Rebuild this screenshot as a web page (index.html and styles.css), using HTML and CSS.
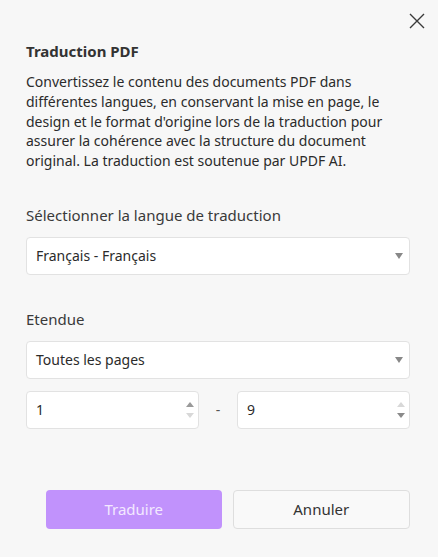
FILE: index.html
```html
<!DOCTYPE html>
<html lang="fr">
<head>
<meta charset="utf-8">
<link rel="stylesheet" href="styles.css">
</head>
<body>
<div class="dialog">
  <div class="topbar">
    <button class="close" aria-label="Fermer">
      <svg width="16" height="16" viewBox="0 0 16 16"><path d="M1 1L15 15M15 1L1 15" stroke="#3a3a3a" stroke-width="1.4" fill="none"/></svg>
    </button>
  </div>
  <h1 class="title">Traduction PDF</h1>
  <p class="desc">Convertissez le contenu des documents PDF dans différentes langues, en conservant la mise en page, le design et le format d'origine lors de la traduction pour assurer la cohérence avec la structure du document original. La traduction est soutenue par UPDF AI.</p>

  <div class="label label-lang">Sélectionner la langue de traduction</div>
  <div class="select">
    <span>Français - Français</span>
    <span class="caret"></span>
  </div>

  <div class="label label-range">Etendue</div>
  <div class="select">
    <span>Toutes les pages</span>
    <span class="caret"></span>
  </div>

  <div class="range-row">
    <div class="spin">
      <span>1</span>
      <span class="arrows"><span class="up dark"></span><span class="down light"></span></span>
    </div>
    <span class="dash">-</span>
    <div class="spin">
      <span>9</span>
      <span class="arrows"><span class="up light"></span><span class="down dark"></span></span>
    </div>
  </div>

  <div class="actions">
    <button class="btn primary">Traduire</button>
    <button class="btn secondary">Annuler</button>
  </div>
</div>
</body>
</html>
```
FILE: styles.css
```css
html, body {
  margin: 0;
  padding: 0;
  background: #f7f7f7;
}
body {
  font-family: "Noto Sans", "Open Sans", sans-serif;
  color: #2b2b2b;
  width: 438px;
  height: 557px;
  overflow: hidden;
}
.dialog {
  padding: 13px 28px 0 26px;
  display: flex;
  flex-direction: column;
}
.topbar {
  display: flex;
  justify-content: flex-end;
  margin-right: -15px;
  height: 16px;
}
.close {
  border: 0;
  background: none;
  padding: 0;
  width: 16px;
  height: 16px;
  display: block;
  cursor: pointer;
}
.title {
  margin: 12px 0 0;
  font-size: 15px;
  font-weight: 700;
  line-height: 20px;
  color: #333;
}
.desc {
  margin: 11px 0 0;
  font-size: 14px;
  line-height: 19.75px;
  color: #2b2b2b;
  padding-right: 20px;
}
.label {
  font-size: 15px;
  line-height: 20px;
  color: #3a3a3a;
}
.label-lang { margin-top: 34px; }
.label-range { margin-top: 34px; }
.select {
  margin-top: 12px;
  height: 38px;
  box-sizing: border-box;
  background: #fff;
  border: 1px solid #e2e2e2;
  border-radius: 4px;
  display: flex;
  align-items: center;
  justify-content: space-between;
  padding: 0 6px 0 9px;
  font-size: 14px;
  color: #2b2b2b;
}
.caret {
  width: 0;
  height: 0;
  border-left: 4.5px solid transparent;
  border-right: 4.5px solid transparent;
  border-top: 6px solid #888;
}
.range-row {
  margin-top: 12px;
  display: flex;
  align-items: center;
}
.spin {
  flex: 1;
  height: 38px;
  box-sizing: border-box;
  background: #fff;
  border: 1px solid #e2e2e2;
  border-radius: 4px;
  display: flex;
  align-items: center;
  justify-content: space-between;
  padding: 0 4px 0 9px;
  font-size: 14px;
  color: #2b2b2b;
}
.dash {
  width: 38px;
  text-align: center;
  font-size: 14px;
  color: #555;
}
.arrows {
  display: flex;
  flex-direction: column;
  gap: 6px;
}
.up, .down {
  width: 0;
  height: 0;
  border-left: 4.5px solid transparent;
  border-right: 4.5px solid transparent;
}
.up { border-bottom: 5px solid #999; }
.down { border-top: 5px solid #999; }
.up.dark { border-bottom-color: #9a9a9a; }
.up.light { border-bottom-color: #d8d8d8; }
.down.dark { border-top-color: #8a8a8a; }
.down.light { border-top-color: #d8d8d8; }
.actions {
  margin-top: 61px;
  display: flex;
  gap: 11px;
  padding-left: 20px;
}
.btn {
  flex: 1;
  height: 39px;
  border-radius: 4px;
  font-family: inherit;
  font-size: 15px;
}
.primary {
  background: #c192fc;
  border: 0;
  color: #f3e9ff;
}
.secondary {
  background: #f9f9f9;
  border: 1px solid #dedede;
  color: #333;
}
```
